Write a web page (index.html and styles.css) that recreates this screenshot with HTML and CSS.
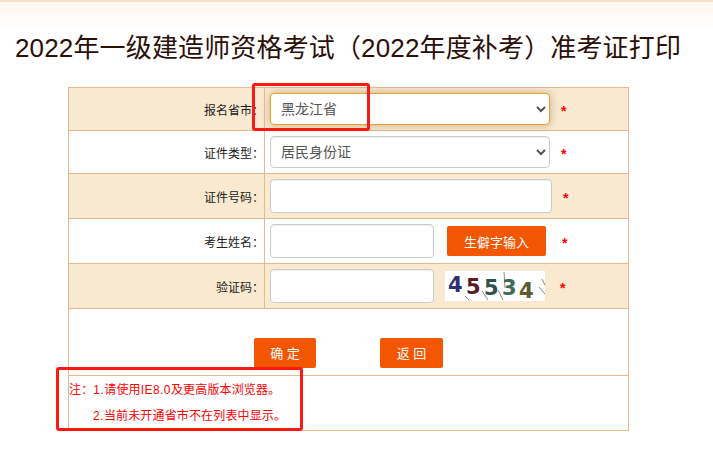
FILE: index.html
```html
<!DOCTYPE html>
<html lang="zh-CN">
<head>
    <meta charset="utf-8"/>
    <title>准考证打印</title>
    <link rel="stylesheet" href="styles.css">
</head>
<body>
<div class="top-band"></div>
<h1 class="title">2022年一级建造师资格考试（2022年度补考）准考证打印</h1>

<table class="form-table">
    <tr class="row row-a">
        <td class="label">报名省市：</td>
        <td class="cell">
            <div class="field">
                <select class="control select focused"><option>黑龙江省</option></select>
                <span class="star star-select">*</span>
            </div>
        </td>
    </tr>
    <tr class="row row-b">
        <td class="label">证件类型：</td>
        <td class="cell">
            <div class="field">
                <select class="control select"><option>居民身份证</option></select>
                <span class="star star-select">*</span>
            </div>
        </td>
    </tr>
    <tr class="row row-c">
        <td class="label">证件号码：</td>
        <td class="cell">
            <div class="field">
                <input class="control input-long" type="text">
                <span class="star star-select">*</span>
            </div>
        </td>
    </tr>
    <tr class="row row-c">
        <td class="label">考生姓名：</td>
        <td class="cell row-white">
            <div class="field">
                <input class="control input-short" type="text">
                <button class="btn btn-rare" type="button">生僻字输入</button>
                <span class="star star-rare">*</span>
            </div>
        </td>
    </tr>
    <tr class="row row-c">
        <td class="label">验证码：</td>
        <td class="cell">
            <div class="field">
                <input class="control input-short" type="text">
                <svg class="captcha" width="100" height="30" viewBox="0 0 100 30">
                    <rect width="100" height="30" fill="#fff"/>
                    <path d="M59 1l1 16M37 20l6 9M53 19l5 10M20 25l4 4M97 8l3 6M94 16l6 7" stroke="#8a8a8a" stroke-width="1" fill="none"/>
                    <text class="captcha-digit" x="3" y="21" fill="#2e3272">4</text>
                    <text class="captcha-digit" x="21" y="23" fill="#5a1a24">5</text>
                    <text class="captcha-digit" x="39" y="24" fill="#2f5050">5</text>
                    <text class="captcha-digit" x="57" y="24" fill="#3e6a5a">3</text>
                    <text class="captcha-digit" x="74" y="27" fill="#5e5a30">4</text>
                </svg>
                <span class="star star-code">*</span>
            </div>
        </td>
    </tr>
    <tr class="row-actions">
        <td colspan="2">
            <div class="actions">
                <button class="btn btn-action" type="button">确 定</button>
                <button class="btn btn-action btn-back" type="button">返 回</button>
            </div>
        </td>
    </tr>
    <tr class="row-notes">
        <td colspan="2" class="notes">
            <div>注：<span class="latin">1.</span>请使用<span class="latin">IE8.0</span>及更高版本浏览器。</div>
            <div class="note-indent"><span class="latin">2.</span>当前未开通省市不在列表中显示。</div>
        </td>
    </tr>
</table>

<!-- red marks drawn over the screenshot -->
<div class="mark mark-select"></div>
<div class="mark mark-notes"></div>
</body>
</html>
```

FILE: styles.css
```css
html {
    font-family: "Liberation Sans", "Noto Sans CJK SC", sans-serif;
}
body {
    margin: 0;
    position: relative;
    height: 450px;
    overflow: hidden;
    background: #fff;
}
.top-band {
    height: 30px;
    box-sizing: border-box;
    border-top: 2px solid #f8e0c8;
    background: linear-gradient(#fef6ef, #fff);
}
.title {
    margin: 0 0 0 15px;
    height: 57px;
    box-sizing: border-box;
    font-size: 26px;
    font-weight: normal;
    letter-spacing: .15px;
    line-height: 36px;
    color: #2b0f08;
    white-space: nowrap;
}
.form-table {
    margin-left: 68px;
    width: 561px;
    border-collapse: collapse;
    table-layout: fixed;
    font-size: 12px;
    color: #222;
}
.form-table td {
    border: 1px solid #e8b88e;
    padding: 0;
}
.row-a, .row-c {
    background: #f9e9d0;
}
.row-a td, .row-b td {
    height: 42px;
}
.row-c td {
    height: 44px;
}
.form-table .row-white {
    background: #fff;
}
.row-c:nth-child(4) {
    background: #fff;
}
.form-table .label {
    width: 195px;
    text-align: right;
}
.form-table .cell {
    padding-left: 5px;
}
.field {
    display: flex;
    align-items: center;
}
.control {
    box-sizing: border-box;
    height: 34px;
    border: 1px solid #ccc;
    border-radius: 4px;
    background: #fff;
    color: #555;
    font-family: inherit;
    font-size: 14px;
    box-shadow: inset 0 1px 1px rgba(0, 0, 0, .075);
}
.select {
    width: 280px;
    height: 32px;
    padding-left: 6px;
}
.focused {
    border-color: #f0a020;
    box-shadow: 0 0 8px rgba(120, 100, 60, .45);
}
.input-long {
    width: 282px;
}
.input-short {
    width: 164px;
}
.star {
    padding-top: 4px;
    color: #f00;
    font-size: 14px;
    font-weight: bold;
    line-height: 13px;
}
.star-select {
    margin-left: 11px;
}
.star-rare {
    margin-left: 16px;
}
.star-code {
    margin-left: 15px;
}
.btn {
    box-sizing: border-box;
    height: 30px;
    border: none;
    border-radius: 2px;
    background: #f25600;
    color: #fff;
    font-family: inherit;
    font-size: 13px;
    padding: 0;
}
.btn-rare {
    width: 99px;
    margin-left: 13px;
}
.captcha {
    display: block;
    margin-left: 11px;
    overflow: visible;
}
.captcha-digit {
    font-family: "DejaVu Sans", sans-serif;
    font-size: 21px;
    font-weight: bold;
}
.row-actions td {
    height: 66px;
}
.actions {
    display: flex;
    gap: 64px;
    padding: 28px 0 7px 185px;
}
.btn-action {
    width: 62px;
}
.btn-back {
    width: 63px;
}
.row-notes td {
    height: 54px;
}
.notes {
    color: #f00;
    font-size: 12px;
    letter-spacing: .15px;
    line-height: 26px;
}
.latin {
    letter-spacing: .45px;
}
.note-indent {
    padding-left: 24px;
}
.mark {
    position: absolute;
    box-sizing: border-box;
    border: 3px solid #fa1a12;
    border-radius: 3px;
}
.mark-select {
    left: 252px;
    top: 83px;
    width: 118px;
    height: 48px;
}
.mark-notes {
    left: 56px;
    top: 367px;
    width: 247px;
    height: 64px;
}
```
